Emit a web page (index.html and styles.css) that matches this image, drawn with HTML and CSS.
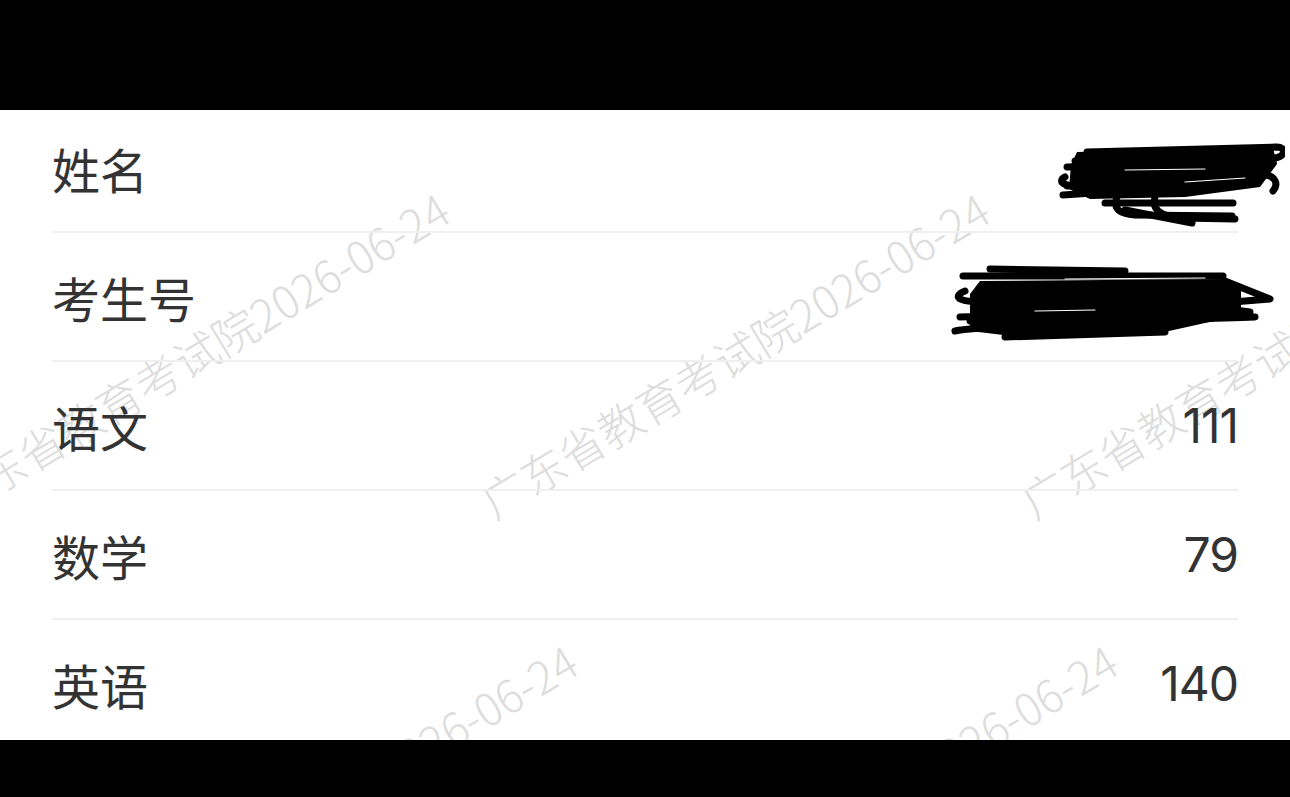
FILE: index.html
```html
<!DOCTYPE html>
<html lang="zh-CN">
<head>
<meta charset="utf-8">
<title>成绩查询</title>
<link rel="stylesheet" href="styles.css">
</head>
<body>
<main class="panel">
  <div class="watermarks" aria-hidden="true">
    <span class="wm wm-a">广东省教育考试院2026-06-24</span>
    <span class="wm wm-b">广东省教育考试院2026-06-24</span>
    <span class="wm wm-c">广东省教育考试院2026-06-24</span>
    <span class="wm wm-d">广东省教育考试院2026-06-24</span>
    <span class="wm wm-e">广东省教育考试院2026-06-24</span>
  </div>
  <ul class="list">
    <li class="row">
      <span class="label">姓名</span>
      <span class="value redacted"></span>
      <svg class="scribble scribble-name" viewBox="0 0 230 92" width="230" height="92" aria-hidden="true">
        <polygon points="22,13 218,9 222,25 205,48 130,58 35,60 14,50 16,26" fill="#000"/>
        <g fill="none" stroke="#000" stroke-width="7" stroke-linecap="round" stroke-linejoin="round">
          <path d="M32 13 L222 8 C231 8 231 17 220 19 L20 22"/>
          <path d="M12 28 L218 23"/>
          <path d="M10 38 C2 42 8 49 30 46 L212 36 C220 38 224 45 218 52"/>
          <path d="M8 56 L185 44"/>
          <path d="M12 47 L200 42"/>
          <path d="M50 64 L178 64"/>
          <path d="M62 58 C57 70 65 75 80 76 L177 77"/>
          <path d="M100 58 C96 70 105 77 125 79 L180 80"/>
          <path d="M70 71 L137 84"/>
        </g>
        <g fill="none" stroke="#fff" stroke-width="1.2" stroke-linecap="round">
          <path d="M70 31 L150 30"/>
          <path d="M130 43 L190 39"/>
        </g>
      </svg>
    </li>
    <li class="row">
      <span class="label">考生号</span>
      <span class="value redacted"></span>
      <svg class="scribble scribble-id" viewBox="0 0 335 90" width="335" height="90" aria-hidden="true">
        <polygon points="35,22 282,20 296,30 296,56 215,74 75,78 25,72 25,35" fill="#000"/>
        <g fill="none" stroke="#000" stroke-width="7" stroke-linecap="round" stroke-linejoin="round">
          <path d="M45 10 L180 12"/>
          <path d="M18 17 L278 17"/>
          <path d="M20 32 C5 38 15 45 50 42 L270 35"/>
          <path d="M280 22 L325 40 L250 46"/>
          <path d="M25 62 L200 58"/>
          <path d="M15 58 L290 50"/>
          <path d="M260 47 L305 53"/>
          <path d="M10 72 C40 66 200 62 310 58"/>
          <path d="M60 78 L220 73"/>
        </g>
        <g fill="none" stroke="#fff" stroke-width="1.2" stroke-linecap="round">
          <path d="M120 20 L260 19"/>
          <path d="M90 52 L150 51"/>
        </g>
      </svg>
    </li>
    <li class="row">
      <span class="label">语文</span>
      <span class="value">111</span>
    </li>
    <li class="row">
      <span class="label">数学</span>
      <span class="value">79</span>
    </li>
    <li class="row">
      <span class="label">英语</span>
      <span class="value">140</span>
    </li>
  </ul>
</main>
</body>
</html>
```
FILE: styles.css
```css
html, body {
  margin: 0;
  padding: 0;
  background: #000;
}

body {
  padding-top: 110px;
  height: 797px;
  box-sizing: border-box;
  overflow: hidden;
  font-family: "Inter", "Noto Sans CJK SC", sans-serif;
}

.panel {
  position: relative;
  height: 630px;
  background: #fff;
  overflow: hidden;
}

.watermarks {
  position: absolute;
  inset: 0;
  z-index: 0;
  pointer-events: none;
}

.wm {
  position: absolute;
  font-family: "Noto Sans CJK SC", sans-serif;
  font-size: 45px;
  font-weight: 300;
  line-height: 45px;
  color: #dddddd;
  white-space: nowrap;
  transform-origin: 0 100%;
  transform: rotate(-31deg);
}

.wm-a { left: -44px; top: 368px; }
.wm-b { left: 496px; top: 368px; }
.wm-c { left: 1036px; top: 368px; }
.wm-d { left: 84px; top: 820px; }
.wm-e { left: 624px; top: 820px; }

.list {
  position: relative;
  z-index: 1;
  list-style: none;
  margin: -6px 52px 0;
  padding: 0;
}

.row {
  position: relative;
  display: flex;
  align-items: center;
  justify-content: space-between;
  height: 127px;
  border-bottom: 2px solid #efefef;
  color: #333;
  font-size: 48px;
}

.label {
  font-family: "Noto Sans CJK SC", sans-serif;
}

.value {
  font-family: "Inter", "Noto Sans CJK SC", sans-serif;
  font-weight: 400;
  letter-spacing: -1px;
}

.scribble {
  position: absolute;
  z-index: 2;
}

.scribble-name {
  right: -47px;
  top: 35px;
}

.scribble-id {
  right: -42px;
  top: 26px;
}
```
